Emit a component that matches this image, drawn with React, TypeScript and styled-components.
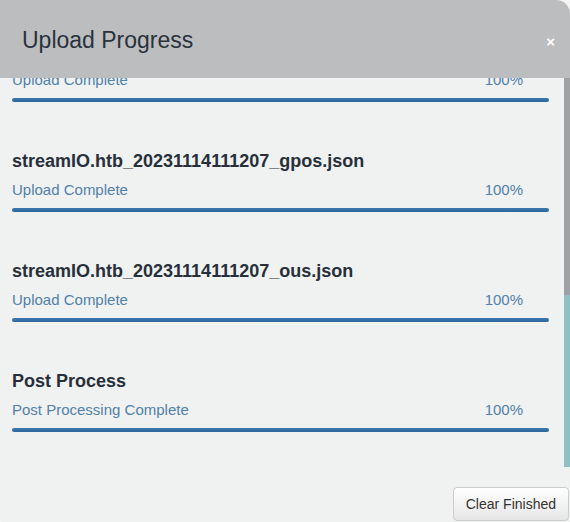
import React, { useLayoutEffect, useRef } from "react";
import styled, { createGlobalStyle } from "styled-components";

const GlobalStyle = createGlobalStyle`
  html, body { margin: 0; padding: 0; background: #f4f4f4; }
  body { font-family: "Liberation Sans", Arial, Helvetica, sans-serif; }
  * { box-sizing: border-box; }
`;

const Modal = styled.div`
  width: 570px;
  height: 522px;
  display: flex;
  flex-direction: column;
  background: #f0f1f1;
  border-top-right-radius: 14px;
  border-bottom-left-radius: 3px;
  overflow: hidden;
`;

const Header = styled.div`
  height: 78px;
  flex: none;
  background: #bcbdbe;
  display: flex;
  align-items: center;
  justify-content: space-between;
  padding: 2px 15px 0 22px;
  position: relative;
  z-index: 1;
`;

const Title = styled.h4`
  margin: 0;
  font-size: 23px;
  font-weight: normal;
  color: #29323d;
  line-height: 28px;
`;

const Close = styled.span`
  color: #ffffff;
  font-size: 15px;
  font-weight: bold;
  line-height: 1;
  padding-top: 2px;
`;

const Body = styled.div`
  height: 389px;
  flex: none;
  display: flex;
`;

const Scroller = styled.div`
  flex: 1;
  overflow: hidden;
  padding: 20px 15px 0 12px;
`;

const Track = styled.div`
  width: 6px;
  flex: none;
  background: #8fc0c3;
  display: flex;
  flex-direction: column;
`;

const Thumb = styled.div`
  height: 217px;
  background: #9fa1a5;
`;

const Item = styled.div`
  margin-bottom: 49px;
`;

const ItemTitle = styled.div`
  font-size: 18px;
  font-weight: bold;
  line-height: 20px;
  color: #27303a;
  margin-bottom: 9px;
`;

const StatusRow = styled.div`
  display: flex;
  justify-content: space-between;
  font-size: 15px;
  line-height: 20px;
  color: #5181a8;
`;

const Percent = styled.span`
  margin-right: 26px;
`;

const Bar = styled.div`
  margin-top: 8px;
  height: 4px;
  border-radius: 2px;
  background: #e2e4e6;
  overflow: hidden;
`;

const Fill = styled.div`
  height: 100%;
  background: linear-gradient(#3a78ae, #2d679b);
`;

const Footer = styled.div`
  flex: 1;
  display: flex;
  justify-content: flex-end;
  align-items: flex-start;
  padding: 20px 1px 0 0;
`;

const Button = styled.button`
  font-family: "Liberation Sans", Arial, Helvetica, sans-serif;
  font-size: 14px;
  line-height: 20px;
  padding: 6px 12px;
  color: #333333;
  background: linear-gradient(#ffffff, #e6e6e6);
  border: 1px solid #cccccc;
  border-radius: 4px;
  cursor: pointer;
`;

type Upload = { name: string; status: string; pct: number };

const uploads: Upload[] = [
  { name: "streamIO.htb_20231114111207_computers.json", status: "Upload Complete", pct: 100 },
  { name: "streamIO.htb_20231114111207_gpos.json", status: "Upload Complete", pct: 100 },
  { name: "streamIO.htb_20231114111207_ous.json", status: "Upload Complete", pct: 100 },
  { name: "Post Process", status: "Post Processing Complete", pct: 100 },
];

export default function App() {
  const ref = useRef<HTMLDivElement>(null);
  useLayoutEffect(() => {
    if (ref.current) ref.current.scrollTop = 57;
  }, []);
  return (
    <>
      <GlobalStyle />
      <Modal>
        <Header>
          <Title>Upload Progress</Title>
          <Close>×</Close>
        </Header>
        <Body>
          <Scroller ref={ref}>
            {uploads.map((u) => (
              <Item key={u.name}>
                <ItemTitle>{u.name}</ItemTitle>
                <StatusRow>
                  <span>{u.status}</span>
                  <Percent>{u.pct}%</Percent>
                </StatusRow>
                <Bar>
                  <Fill style={{ width: `${u.pct}%` }} />
                </Bar>
              </Item>
            ))}
          </Scroller>
          <Track>
            <Thumb />
          </Track>
        </Body>
        <Footer>
          <Button>Clear Finished</Button>
        </Footer>
      </Modal>
    </>
  );
}
